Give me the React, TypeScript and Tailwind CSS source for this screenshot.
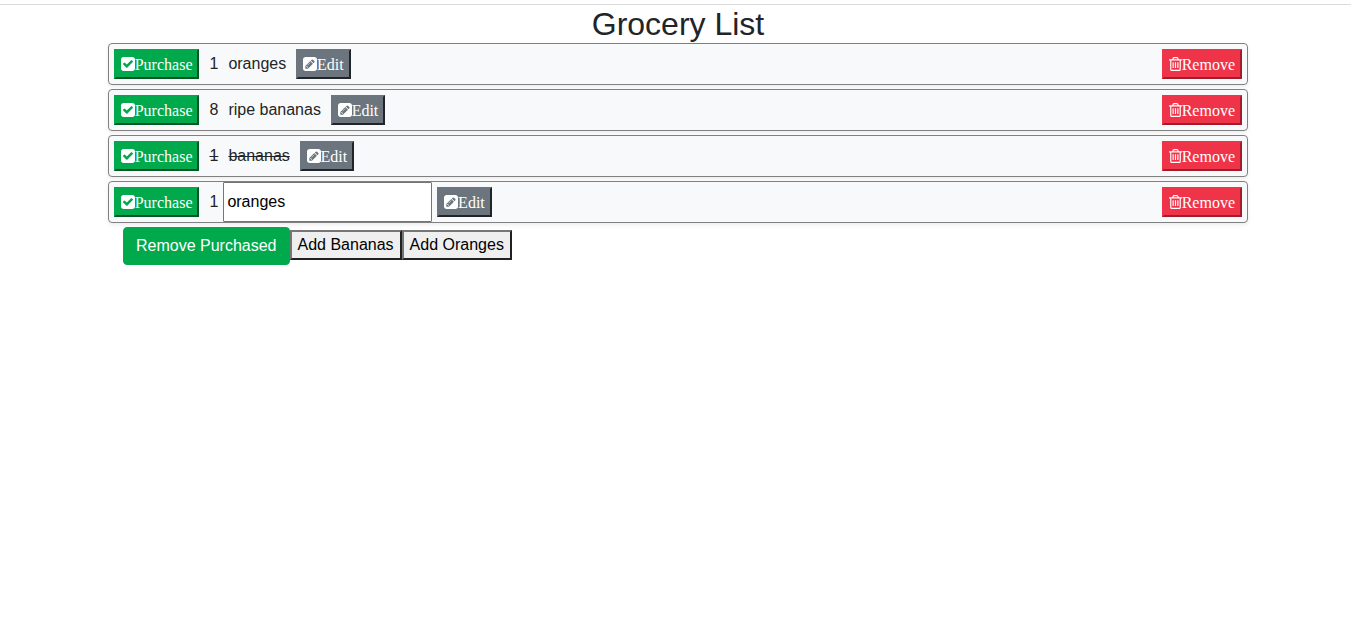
import { useState } from "react";

type Item = { id: number; quantity: number; name: string; purchased?: boolean; editing?: boolean };

const initialItems: Item[] = [
  { id: 1, quantity: 1, name: "oranges" },
  { id: 2, quantity: 8, name: "ripe bananas" },
  { id: 3, quantity: 1, name: "bananas", purchased: true },
  { id: 4, quantity: 1, name: "oranges", editing: true },
];

function CheckSquare() {
  return (
    <svg
      viewBox="128 128 1536 1536"
      preserveAspectRatio="none"
      className="-mr-[0.29px] h-[14px] w-[14px] shrink-0"
      fill="currentColor"
      aria-hidden="true"
    >
      <path d="M813 1299l614-614q19-19 19-45t-19-45l-102-102q-19-19-45-19t-45 19l-467 467-211-211q-19-19-45-19t-45 19l-102 102q-19 19-19 45t19 45l358 358q19 19 45 19t45-19zm851-883v960q0 119-84.5 203.5t-203.5 84.5h-960q-119 0-203.5-84.5t-84.5-203.5v-960q0-119 84.5-203.5t203.5-84.5h960q119 0 203.5 84.5t84.5 203.5z" />
    </svg>
  );
}

function PencilSquare() {
  return (
    <svg
      viewBox="0 128 1536 1536"
      preserveAspectRatio="none"
      className="-mr-[0.29px] h-[14px] w-[14px] shrink-0"
      fill="currentColor"
      aria-hidden="true"
    >
      <path d="M404 1108l152 152-52 52h-56v-96h-96v-56zm414-390q14 13-3 30l-291 291q-17 17-30 3-14-13 3-30l291-291q17-17 30-3zm-274 690l544-544-288-288-544 544v288h288zm608-608l92-92q28-28 28-68t-28-68l-152-152q-28-28-68-28t-68 28l-92 92zm384-384v960q0 119-84.5 203.5t-203.5 84.5h-960q-119 0-203.5-84.5t-84.5-203.5v-960q0-119 84.5-203.5t203.5-84.5h960q119 0 203.5 84.5t84.5 203.5z" />
    </svg>
  );
}

function Trash() {
  return (
    <svg
      viewBox="192 128 1408 1536"
      preserveAspectRatio="none"
      className="-mr-[0.43px] h-[14px] w-[13px] shrink-0"
      fill="currentColor"
      aria-hidden="true"
    >
      <path d="M704 736v576q0 14-9 23t-23 9h-64q-14 0-23-9t-9-23v-576q0-14 9-23t23-9h64q14 0 23 9t9 23zm256 0v576q0 14-9 23t-23 9h-64q-14 0-23-9t-9-23v-576q0-14 9-23t23-9h64q14 0 23 9t9 23zm256 0v576q0 14-9 23t-23 9h-64q-14 0-23-9t-9-23v-576q0-14 9-23t23-9h64q14 0 23 9t9 23zm128 724v-948h-896v948q0 22 7 40.5t14.5 27 10.5 8.5h832q3 0 10.5-8.5t14.5-27 7-40.5zm-672-1076h448l-48-117q-7-9-17-11h-317q-10 2-17 11zm928 32v64q0 14-9 23t-23 9h-96v948q0 83-47 143.5t-113 60.5h-832q-66 0-113-58.5t-47-141.5v-952h-96q-14 0-23-9t-9-23v-64q0-14 9-23t23-9h309l70-167q15-37 54-63t79-26h320q40 0 79 26t54 63l70 167h309q14 0 23 9t9 23z" />
    </svg>
  );
}

const iconButton =
  "flex h-[30px] shrink-0 items-center border-2 p-[5px] font-['Liberation_Serif',serif] text-base leading-4 text-white";

export default function App() {
  const [items, setItems] = useState(initialItems);
  const update = (id: number, change: Partial<Item>) =>
    setItems(items.map((item) => (item.id === id ? { ...item, ...change } : item)));
  const add = (name: string) =>
    setItems([...items, { id: Math.max(0, ...items.map((i) => i.id)) + 1, quantity: 1, name }]);

  return (
    <div className="min-h-screen bg-white pt-1 font-['Liberation_Sans',Arial,sans-serif] text-base leading-6 text-[#212529]">
      <main className="border-t border-[#d9dbde]">
        <div className="ml-[108px] w-[1140px]">
          <h1 className="h-[38px] text-center text-[32px] leading-[38.4px] font-medium">Grocery List</h1>
          <ul className="flex flex-col gap-1">
            {items.map((item) => (
              <li
                key={item.id}
                className="flex h-[42px] items-center rounded border border-[#808080] bg-[#f8f9fa] px-[5px] shadow-[0_2px_4px_rgba(0,0,0,0.075)]"
              >
                <button
                  className={`${iconButton} border-t-[#00a94c] border-r-[#005526] border-b-[#005526] border-l-[#00a94c] bg-[#00a94c]`}
                  onClick={() => update(item.id, { purchased: !item.purchased })}
                >
                  <CheckSquare />
                  <span className="mt-0.5">Purchase</span>
                </button>
                <span className={`ml-[10px] ${item.purchased ? "line-through" : ""}`}>{item.quantity}</span>
                {item.editing ? (
                  <input
                    className="ml-[5px] h-10 w-[209px] rounded-[1px] border border-[#767676] bg-white px-[3px] text-black outline-none"
                    value={item.name}
                    onChange={(e) => update(item.id, { name: e.target.value })}
                  />
                ) : (
                  <span className={`ml-[10px] ${item.purchased ? "line-through" : ""}`}>{item.name}</span>
                )}
                <button
                  className={`${iconButton} ${item.editing ? "ml-[5px]" : "ml-[10px]"} border-t-[#6c757d] border-r-[#212529] border-b-[#212529] border-l-[#6c757d] bg-[#6c757d]`}
                  onClick={() => update(item.id, { editing: !item.editing })}
                >
                  <PencilSquare />
                  <span className="mt-0.5">Edit</span>
                </button>
                <button
                  className={`${iconButton} ml-auto border-t-[#ef3449] border-r-[#a01d2c] border-b-[#a01d2c] border-l-[#ef3449] bg-[#ef3449]`}
                  onClick={() => setItems(items.filter((i) => i.id !== item.id))}
                >
                  <Trash />
                  <span className="mt-0.5">Remove</span>
                </button>
              </li>
            ))}
          </ul>
          <div className="mt-1 flex items-start pl-[15px]">
            <button
              className="h-[38px] rounded border border-[#00a94c] bg-[#00a94c] px-3 text-white"
              onClick={() => setItems(items.filter((i) => !i.purchased))}
            >
              Remove Purchased
            </button>
            {["Bananas", "Oranges"].map((name) => (
              <button
                key={name}
                className="mt-[3px] h-[30px] border-2 border-t-[#767676] border-r-[#212121] border-b-[#212121] border-l-[#767676] bg-[#efefef] px-[6px] text-black"
                onClick={() => add(name.toLowerCase())}
              >
                Add {name}
              </button>
            ))}
          </div>
        </div>
      </main>
    </div>
  );
}
